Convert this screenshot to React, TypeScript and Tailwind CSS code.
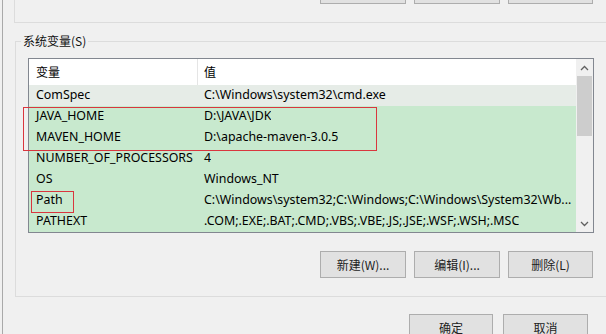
const rows: [string, string][] = [
  ["ComSpec", "C:\\Windows\\system32\\cmd.exe"],
  ["JAVA_HOME", "D:\\JAVA\\JDK"],
  ["MAVEN_HOME", "D:\\apache-maven-3.0.5"],
  ["NUMBER_OF_PROCESSORS", "4"],
  ["OS", "Windows_NT"],
  ["Path", "C:\\Windows\\system32;C:\\Windows;C:\\Windows\\System32\\Wb..."],
  ["PATHEXT", ".COM;.EXE;.BAT;.CMD;.VBS;.VBE;.JS;.JSE;.WSF;.WSH;.MSC"],
];

function Btn({ label, w }: { label: string; w: string }) {
  return (
    <div
      className={`${w} h-[27px] shrink-0 bg-[#e1e1e1] border border-[#adadad] flex items-center justify-center text-[12px] text-[#222]`}
    >
      {label}
    </div>
  );
}

export default function App() {
  return (
    <div className="relative w-[606px] h-[334px] overflow-hidden bg-[#f0f0f0] pl-[2px] font-['Noto_Sans','Noto_Sans_CJK_SC',sans-serif] text-[12px] text-black">
      <div className="h-full border-l border-[#a9a9a9] pl-[11px] flex flex-col">
        {/* previous group box (cut off) */}
        <div className="h-[23px] shrink-0 border-l border-b border-[#dcdcdc] flex justify-end gap-[8px] pr-[13px]">
          <div className="-mt-[23px] flex gap-[8px]">
            <Btn label="" w="w-[86px]" />
            <Btn label="" w="w-[86px]" />
            <Btn label="" w="w-[85px]" />
          </div>
        </div>

        {/* system variables group */}
        <div className="mt-[18px] ml-px shrink-0 border-l border-t border-b border-[#dcdcdc] flex flex-col pl-[12px] pb-[18px]">
          <div className="-mt-[9px] ml-[-7px] self-start bg-[#f0f0f0] px-[2px] h-[16px] leading-[16px] font-['Noto_Sans_CJK_SC',sans-serif] text-[12px] text-[#111]">
            系统变量(S)
          </div>

          {/* list view */}
          <div className="mt-[9px] w-[566px] border border-[#828790] flex bg-white">
            <div className="flex-1 flex flex-col">
              <div className="h-[26px] flex items-center bg-white">
                <div className="w-[169px] h-full flex items-center pl-[7px] border-r border-[#e5e5e5] font-['Noto_Sans_CJK_SC',sans-serif]">
                  变量
                </div>
                <div className="pl-[6px] font-['Noto_Sans_CJK_SC',sans-serif]">值</div>
              </div>
              {rows.map(([k, v], i) => (
                <div
                  key={k}
                  className={`h-[21px] flex items-center text-[12.4px] ${i === 0 ? "bg-[#e6ece7]" : "bg-[#c8e9ce]"}`}
                >
                  <div className="w-[169px] pl-[7px] whitespace-nowrap">{k}</div>
                  <div className="pl-[6px] whitespace-nowrap overflow-hidden">{v}</div>
                </div>
              ))}
            </div>
            {/* scrollbar */}
            <div className="w-[17px] bg-[#f0f0f0] flex flex-col">
              <div className="h-[17px] flex items-center justify-center">
                <svg width="9" height="6" viewBox="0 0 9 6">
                  <path d="M1 5 L4.5 1.5 L8 5" fill="none" stroke="#606060" strokeWidth="1.3" />
                </svg>
              </div>
              <div className="mx-[1px] h-[60px] bg-[#cdcdcd]" />
              <div className="flex-1" />
              <div className="h-[17px] flex items-center justify-center">
                <svg width="9" height="6" viewBox="0 0 9 6">
                  <path d="M1 1 L4.5 4.5 L8 1" fill="none" stroke="#606060" strokeWidth="1.3" />
                </svg>
              </div>
            </div>
          </div>

          {/* buttons */}
          <div className="mt-[18px] w-[566px] flex justify-end gap-[8px] pr-[1px] font-['Noto_Sans_CJK_SC',sans-serif]">
            <Btn label="新建(W)..." w="w-[86px]" />
            <Btn label="编辑(I)..." w="w-[86px]" />
            <Btn label="删除(L)" w="w-[85px]" />
          </div>
        </div>

        {/* dialog buttons */}
        <div className="mt-[17px] flex justify-end gap-[10px] pr-[18px] font-['Noto_Sans_CJK_SC',sans-serif]">
          <Btn label="确定" w="w-[84px]" />
          <Btn label="取消" w="w-[85px]" />
        </div>
      </div>

      {/* red annotation boxes */}
      <div className="absolute left-[23px] top-[107px] w-[354px] h-[44px] border border-[#d9363e]" />
      <div className="absolute left-[31px] top-[191px] w-[43px] h-[22px] border border-[#d9363e]" />
    </div>
  );
}
